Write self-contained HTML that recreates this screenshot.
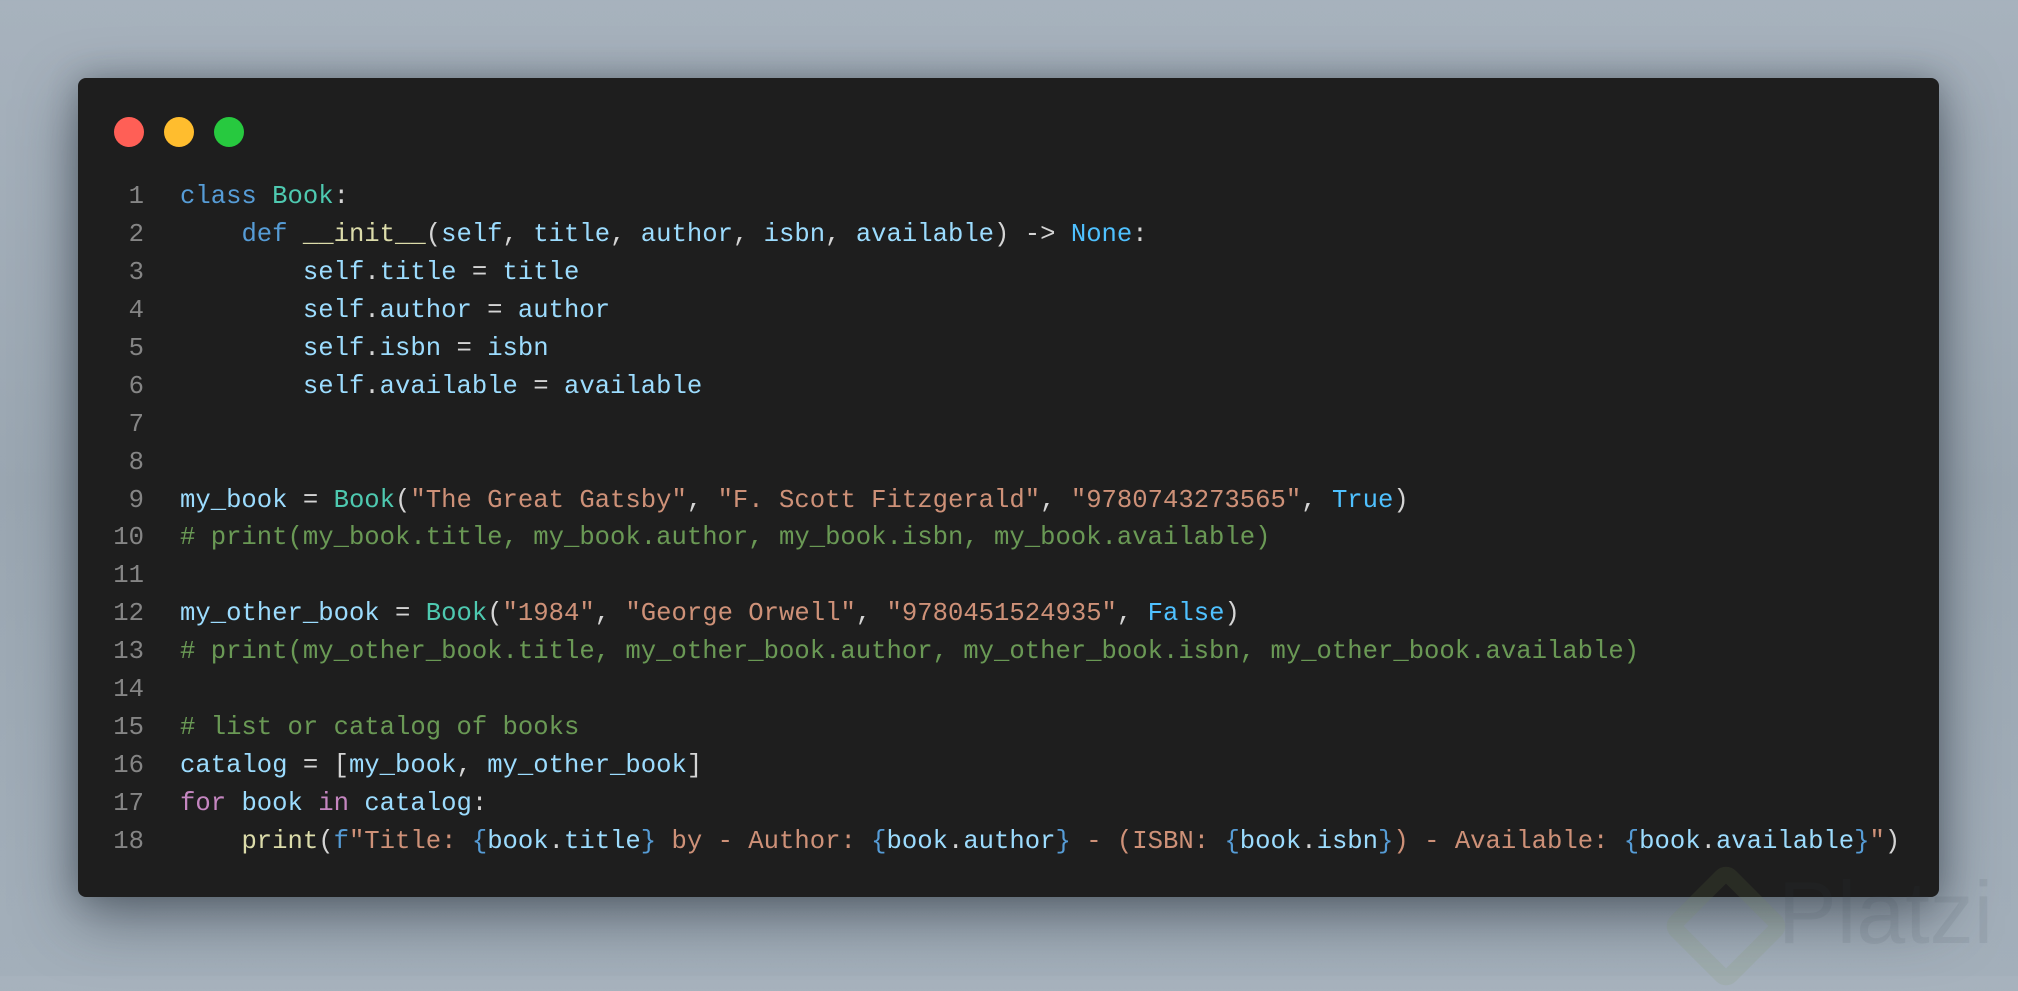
<!DOCTYPE html>
<html><head><meta charset="utf-8"><style>
html,body{margin:0;padding:0}
body{width:2018px;height:976px;overflow:hidden;position:relative;background:linear-gradient(180deg,#a7b2bd 0%,#9aa6b1 50%,#a3afba 100%);font-family:"Liberation Mono",monospace}
.win{position:absolute;left:78px;top:78px;width:1861px;height:819px;background:#1e1e1e;border-radius:8px;box-shadow:0 20px 60px rgba(40,50,60,.55),0 0 30px rgba(40,50,60,.3)}
.dot{position:absolute;top:39px;width:30px;height:30px;border-radius:50%}
.code{position:absolute;left:0;top:178px;font-size:25.6px;line-height:37.93px;white-space:pre;color:#d4d4d4}
.ln{display:inline-block;width:144px;text-align:right;color:#858585;margin-right:36px}
.k{color:#569cd6}.c{color:#4ec9b0}.v{color:#9cdcfe}.s{color:#ce9178}.m{color:#6a9955}.f{color:#dcdcaa}.p{color:#c586c0}.b{color:#4fc1ff}
.wm{position:absolute;left:1778px;top:862px;font-family:"Liberation Sans",sans-serif;font-size:88px;color:rgba(60,70,80,.09)}
.wd{position:absolute;left:1680px;top:880px;width:60px;height:60px;border:16px solid rgba(120,150,80,.12);border-radius:14px;transform:rotate(45deg)}
</style></head><body>
<div class="win">
<div class="dot" style="left:36px;background:#ff5f56"></div>
<div class="dot" style="left:86px;background:#ffbd2e"></div>
<div class="dot" style="left:136px;background:#27c93f"></div>
</div>
<div class="code" style="left:0"><span class="ln">1</span><span class="k">class</span> <span class="c">Book</span>:
<span class="ln">2</span>    <span class="k">def</span> <span class="f">__init__</span>(<span class="v">self</span>, <span class="v">title</span>, <span class="v">author</span>, <span class="v">isbn</span>, <span class="v">available</span>) -&gt; <span class="b">None</span>:
<span class="ln">3</span>        <span class="v">self</span>.<span class="v">title</span> = <span class="v">title</span>
<span class="ln">4</span>        <span class="v">self</span>.<span class="v">author</span> = <span class="v">author</span>
<span class="ln">5</span>        <span class="v">self</span>.<span class="v">isbn</span> = <span class="v">isbn</span>
<span class="ln">6</span>        <span class="v">self</span>.<span class="v">available</span> = <span class="v">available</span>
<span class="ln">7</span>
<span class="ln">8</span>
<span class="ln">9</span><span class="v">my_book</span> = <span class="c">Book</span>(<span class="s">"The Great Gatsby"</span>, <span class="s">"F. Scott Fitzgerald"</span>, <span class="s">"9780743273565"</span>, <span class="b">True</span>)
<span class="ln">10</span><span class="m"># print(my_book.title, my_book.author, my_book.isbn, my_book.available)</span>
<span class="ln">11</span>
<span class="ln">12</span><span class="v">my_other_book</span> = <span class="c">Book</span>(<span class="s">"1984"</span>, <span class="s">"George Orwell"</span>, <span class="s">"9780451524935"</span>, <span class="b">False</span>)
<span class="ln">13</span><span class="m"># print(my_other_book.title, my_other_book.author, my_other_book.isbn, my_other_book.available)</span>
<span class="ln">14</span>
<span class="ln">15</span><span class="m"># list or catalog of books</span>
<span class="ln">16</span><span class="v">catalog</span> = [<span class="v">my_book</span>, <span class="v">my_other_book</span>]
<span class="ln">17</span><span class="p">for</span> <span class="v">book</span> <span class="p">in</span> <span class="v">catalog</span>:
<span class="ln">18</span>    <span class="f">print</span>(<span class="k">f</span><span class="s">"Title: </span><span class="k">{</span><span class="v">book</span>.<span class="v">title</span><span class="k">}</span><span class="s"> by - Author: </span><span class="k">{</span><span class="v">book</span>.<span class="v">author</span><span class="k">}</span><span class="s"> - (ISBN: </span><span class="k">{</span><span class="v">book</span>.<span class="v">isbn</span><span class="k">}</span><span class="s">) - Available: </span><span class="k">{</span><span class="v">book</span>.<span class="v">available</span><span class="k">}</span><span class="s">"</span>)</div>
<div class="wd"></div>
<div class="wm">Platzi</div>
</body></html>
